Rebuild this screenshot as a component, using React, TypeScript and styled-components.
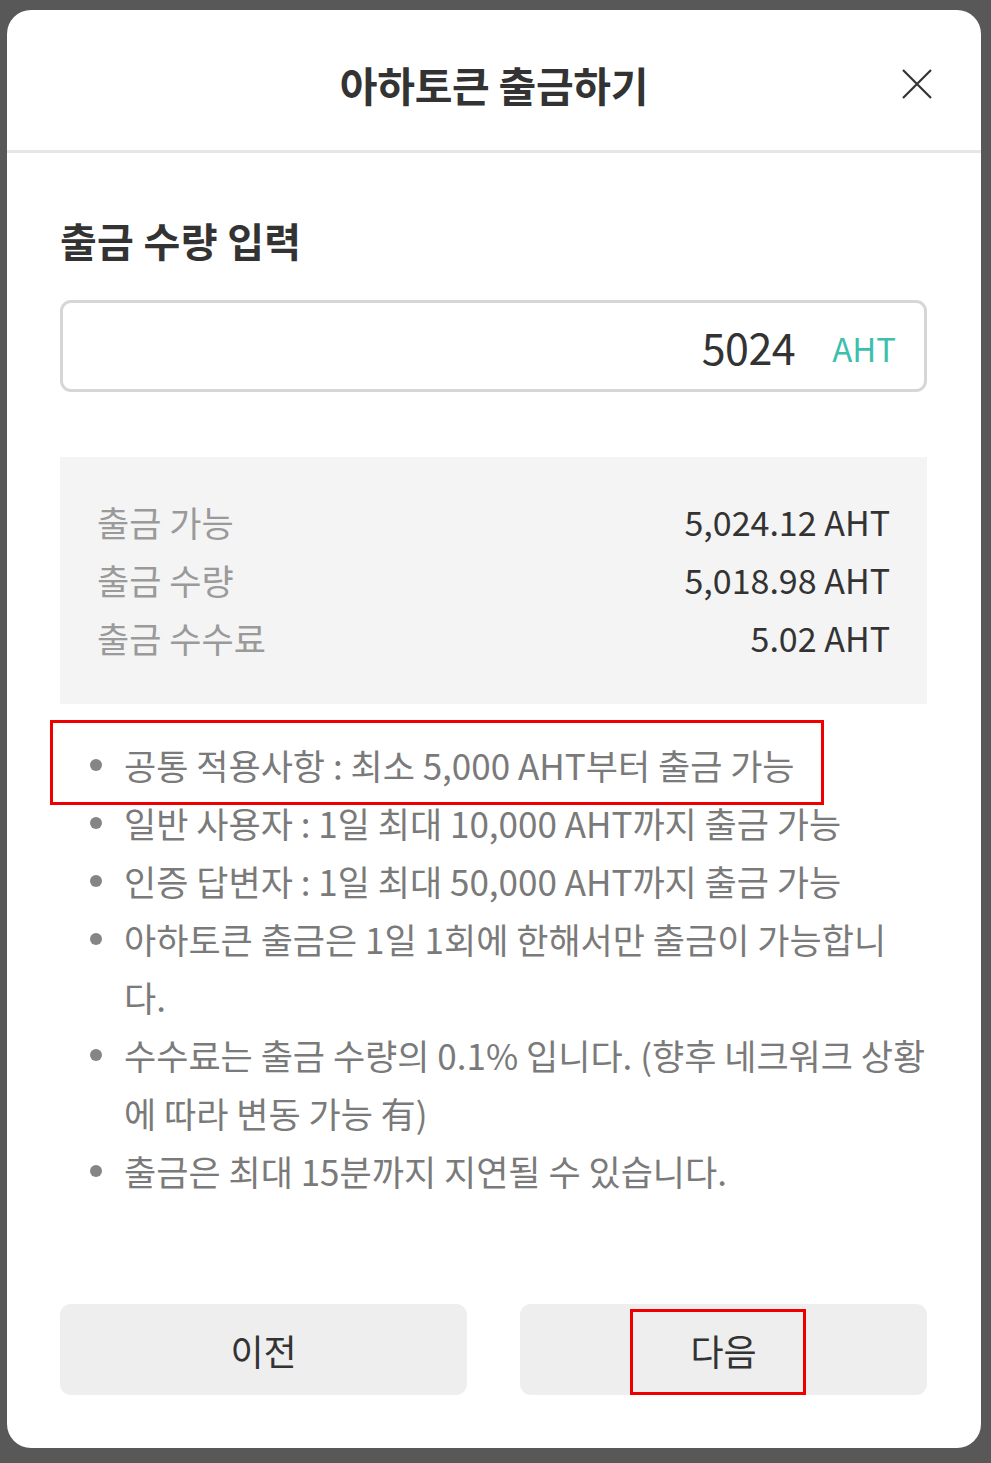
import React from "react";
import styled, { createGlobalStyle } from "styled-components";

const GlobalStyle = createGlobalStyle`
  html, body {
    margin: 0;
    padding: 0;
    background: #585858;
  }
  body {
    font-family: "Noto Sans CJK KR", "Noto Sans", sans-serif;
  }
  * { box-sizing: border-box; }
`;

const Page = styled.div`
  width: 991px;
  height: 1463px;
  padding: 10px 10px 15px 7px;
  display: flex;
`;

const Modal = styled.div`
  flex: 1;
  background: #ffffff;
  border-radius: 24px;
  display: flex;
  flex-direction: column;
  overflow: hidden;
`;

const Header = styled.header`
  position: relative;
  height: 143px;
  border-bottom: 3px solid #e6e6e6;
  display: flex;
  align-items: center;
  justify-content: center;
  padding-top: 8px;
`;

const Title = styled.h1`
  margin: 0;
  font-size: 41px;
  font-weight: 700;
  color: #333333;
  letter-spacing: -0.3px;
`;

const CloseButton = styled.button`
  position: absolute;
  right: 48px;
  top: 58px;
  width: 32px;
  height: 32px;
  padding: 0;
  border: none;
  background: transparent;
  display: flex;
  align-items: center;
  justify-content: center;
`;

const Body = styled.div`
  flex: 1;
  display: flex;
  flex-direction: column;
  padding: 0 54px 53px 53px;
`;

const SectionTitle = styled.h2`
  margin: 63px 0 0;
  font-size: 40px;
  line-height: 48px;
  font-weight: 700;
  color: #333333;
  letter-spacing: 0.3px;
`;

const InputBox = styled.div`
  margin-top: 36px;
  height: 92px;
  border: 3px solid #d6d6d6;
  border-radius: 11px;
  display: flex;
  align-items: center;
  justify-content: flex-end;
  padding-right: 28px;
  gap: 37px;
`;

const Amount = styled.span`
  font-size: 43px;
  color: #333333;
  line-height: 1;
  letter-spacing: -0.5px;
`;

const Unit = styled.span`
  font-size: 33px;
  color: #3dbfae;
  line-height: 1;
  margin-top: 4px;
`;

const SummaryBox = styled.div`
  margin-top: 65px;
  background: #f4f4f4;
  padding: 35px 37px 38px 37px;
  display: flex;
  flex-direction: column;
`;

const SummaryRow = styled.div`
  display: flex;
  justify-content: space-between;
  align-items: center;
  height: 58px;
  font-size: 35px;
`;

const SummaryLabel = styled.span`
  color: #9a9a9a;
`;

const SummaryValue = styled.span`
  color: #333333;
  font-size: 34px;
`;

const NoteList = styled.ul`
  list-style: none;
  margin: 32px 0 0;
  padding: 0;
`;

const NoteItem = styled.li`
  position: relative;
  padding-left: 64px;
  font-size: 35px;
  line-height: 58px;
  color: #7a7a7a;
  word-break: break-all;
  &::before {
    content: "";
    position: absolute;
    left: 30px;
    top: 23px;
    width: 12px;
    height: 12px;
    border-radius: 50%;
    background: #858585;
  }
`;

const Highlight = styled.span<{ $top: number; $left: number; $width: number; $height: number }>`
  position: absolute;
  top: ${(p) => p.$top}px;
  left: ${(p) => p.$left}px;
  width: ${(p) => p.$width}px;
  height: ${(p) => p.$height}px;
  border: 3px solid #ee0000;
  pointer-events: none;
`;

const ButtonRow = styled.div`
  margin-top: auto;
  display: grid;
  grid-template-columns: 1fr 1fr;
  gap: 53px;
`;

const ActionButton = styled.button`
  position: relative;
  height: 91px;
  border: none;
  border-radius: 11px;
  background: #eeeeee;
  font-family: inherit;
  font-size: 36px;
  color: #333333;
  padding: 0;
`;

const summary = [
  { label: "출금 가능", value: "5,024.12 AHT" },
  { label: "출금 수량", value: "5,018.98 AHT" },
  { label: "출금 수수료", value: "5.02 AHT" },
];

const notes = [
  "공통 적용사항 : 최소 5,000 AHT부터 출금 가능",
  "일반 사용자 : 1일 최대 10,000 AHT까지 출금 가능",
  "인증 답변자 : 1일 최대 50,000 AHT까지 출금 가능",
  "아하토큰 출금은 1일 1회에 한해서만 출금이 가능합니다.",
  "수수료는 출금 수량의 0.1% 입니다. (향후 네크워크 상황에 따라 변동 가능 有)",
  "출금은 최대 15분까지 지연될 수 있습니다.",
];

export default function App() {
  return (
    <>
      <GlobalStyle />
      <Page>
        <Modal>
          <Header>
            <Title>아하토큰 출금하기</Title>
            <CloseButton aria-label="닫기">
              <svg width="32" height="32" viewBox="0 0 32 32">
                <path d="M2 2 L30 30 M30 2 L2 30" stroke="#333" strokeWidth="2.2" fill="none" />
              </svg>
            </CloseButton>
          </Header>
          <Body>
            <SectionTitle>출금 수량 입력</SectionTitle>
            <InputBox>
              <Amount>5024</Amount>
              <Unit>AHT</Unit>
            </InputBox>
            <SummaryBox>
              {summary.map((s) => (
                <SummaryRow key={s.label}>
                  <SummaryLabel>{s.label}</SummaryLabel>
                  <SummaryValue>{s.value}</SummaryValue>
                </SummaryRow>
              ))}
            </SummaryBox>
            <NoteList>
              {notes.map((n, i) => (
                <NoteItem key={i}>
                  {n}
                  {i === 0 && <Highlight $top={-16} $left={-10} $width={774} $height={85} />}
                </NoteItem>
              ))}
            </NoteList>
            <ButtonRow>
              <ActionButton>이전</ActionButton>
              <ActionButton>
                다음
                <Highlight $top={5} $left={110} $width={176} $height={86} />
              </ActionButton>
            </ButtonRow>
          </Body>
        </Modal>
      </Page>
    </>
  );
}
